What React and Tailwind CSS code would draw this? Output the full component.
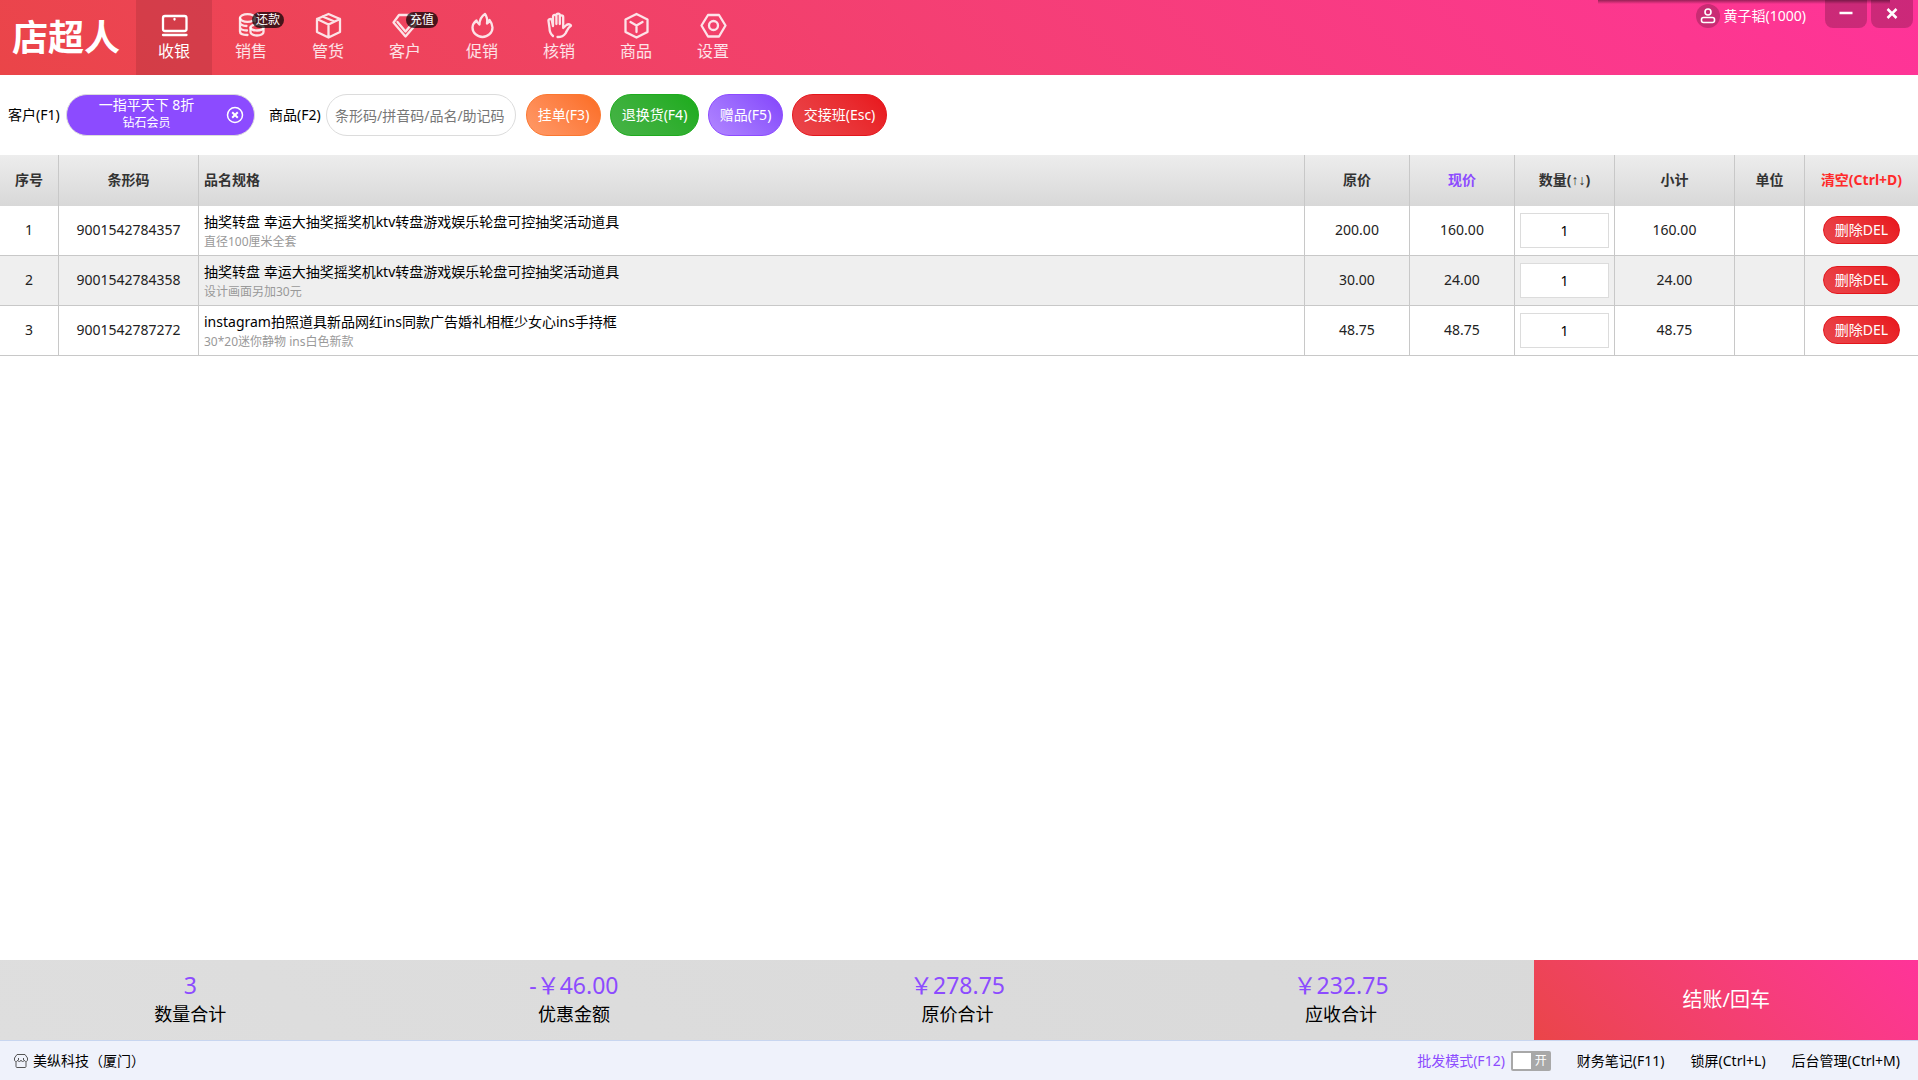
import { useState } from "react";

const NAV_ITEMS = [
  { key: "cashier", label: "收银" },
  { key: "sales", label: "销售", badge: "还款" },
  { key: "stock", label: "管货" },
  { key: "customer", label: "客户", badge: "充值" },
  { key: "promo", label: "促销" },
  { key: "verify", label: "核销" },
  { key: "goods", label: "商品" },
  { key: "settings", label: "设置" },
];

const ICONS = {
  cashier: (
    <>
      <rect x="2" y="4" width="23.5" height="15" rx="2" />
      <path d="M13.5 7v.5M2 23h23.5" />
    </>
  ),
  sales: (
    <>
      <ellipse cx="9.5" cy="6" rx="7.5" ry="3.8" />
      <path d="M2 6v4.5c0 2 3 3.5 6.5 3.5M2 10.5V15c0 2 3 3.5 7 3.5M2 15v4.5c0 2 3 3.5 7.5 3.5M17 6v3.500" />
      <ellipse cx="19" cy="15.5" rx="6.5" ry="3" />
      <path d="M12.5 15.5V20c0 2 3 3.5 6.5 3.5s6.5-1.5 6.5-3.5v-4.5" />
    </>
  ),
  stock: (
    <path d="M13.5 2 25 7v13l-11.5 5.500L2 20V7zM2 7l11.5 5.500L25 7M13.5 12.5v13M7.5 4.5l12 5" />
  ),
  customer: (
    <>
      <path d="M7 3h13l5.5 7.5-12 14-12-14z" />
      <path d="M5.5 10l8 9.5 8-9.500" />
    </>
  ),
  promo: (
    <path d="M7.5 8.5C4.5 11 3.5 13.5 3.5 15.5c0 5.2 4.5 9.5 10 9.5s10-4.3 10-9.5c0-3-1.5-5.5-3-7.5-.3 1.5-1 2.7-2.5 3.5.5-3.5.3-6.5-2-9.500-3 2-5.500 5.500-5.500 10.500C9 11.500 8 10 7.500 8.500z" />
  ),
  verify: (
    <path d="M7 24C4.5 22 3.5 19.5 3.5 16L2.5 9a1.700 1.700 0 0 1 3.300-.8L7 14V4.500a1.700 1.700 0 0 1 3.400 0V12M10.400 4V3.300a1.700 1.700 0 0 1 3.400 0V12M13.800 5a1.700 1.700 0 0 1 3.400 0V16l3.300-3c2-1.500 4.500-.5 4.500.8-3 1.700-4 5-5.500 7.500-2 3-5 3.700-8 3.700" />
  ),
  goods: (
    <path d="M13.5 2l11 5.500V20l-11 5.500-11-5.500V7.500zM7.500 10l6 3.500 6-3.500M13.500 13.500V20" />
  ),
  settings: (
    <>
      <path d="M8 3h11l6.500 10.500L19 24.500H8L1.500 13.500z" />
      <circle cx="13.5" cy="13.5" r="4.5" />
    </>
  ),
};

const NavIcon = ({ name }) => (
  <svg
    className="h-[27px] w-[27px]"
    viewBox="0 0 27 27"
    fill="none"
    stroke="currentColor"
    strokeWidth="2.3"
    strokeLinecap="round"
    strokeLinejoin="round"
  >
    {ICONS[name]}
  </svg>
);

const INITIAL_ROWS = [
  {
    code: "9001542784357",
    name: "抽奖转盘 幸运大抽奖摇奖机ktv转盘游戏娱乐轮盘可控抽奖活动道具",
    spec: "直径100厘米全套",
    price: 200,
    now: 160,
    qty: 1,
  },
  {
    code: "9001542784358",
    name: "抽奖转盘 幸运大抽奖摇奖机ktv转盘游戏娱乐轮盘可控抽奖活动道具",
    spec: "设计画面另加30元",
    price: 30,
    now: 24,
    qty: 1,
  },
  {
    code: "9001542787272",
    name: "instagram拍照道具新品网红ins同款广告婚礼相框少女心ins手持框",
    spec: "30*20迷你静物 ins白色新款",
    price: 48.75,
    now: 48.75,
    qty: 1,
  },
];

const Header = ({ active, onSelect }) => (
  <header className="relative flex h-[75px] bg-linear-45 from-[#ea4548] to-[#ff3399] text-white">
    <h1 className="w-[136px] shrink-0 pl-3 text-[36px] leading-[75px] font-bold whitespace-nowrap">
      店超人
    </h1>
    <nav className="flex gap-px">
      {NAV_ITEMS.map((item) => (
        <button
          key={item.key}
          onClick={() => onSelect(item.key)}
          className={`relative flex w-[76px] flex-col items-center pt-3 ${
            active === item.key ? "bg-black/10" : "text-white/85"
          }`}
        >
          <NavIcon name={item.key} />
          <span className="text-base">{item.label}</span>
          {item.badge && (
            <span className="absolute top-3 left-[39px] h-4 w-8 rounded-full bg-black/70 text-center text-xs leading-4 text-white">
              {item.badge}
            </span>
          )}
        </button>
      ))}
    </nav>

    <div className="ml-auto flex items-start gap-1 pr-[5px]">
      <div className="mr-[15px] flex items-center gap-1 pt-1">
        <span className="flex h-6 w-6 items-center justify-center rounded-full bg-black/20">
          <svg
            className="h-4 w-4"
            viewBox="0 0 16 16"
            fill="none"
            stroke="currentColor"
            strokeWidth="1.6"
          >
            <circle cx="8" cy="4" r="3" />
            <rect x="1.5" y="9.5" width="13" height="5" rx="2" />
          </svg>
        </span>
        <span className="text-sm">黄子韬(1000)</span>
      </div>
      <button
        aria-label="最小化"
        className="flex h-7 w-[42px] items-center justify-center rounded-b-lg bg-black/20"
      >
        <svg
          className="h-4 w-4"
          viewBox="0 0 16 16"
          stroke="currentColor"
          strokeWidth="2.5"
        >
          <path d="M1.5 7h13" />
        </svg>
      </button>
      <button
        aria-label="关闭"
        className="flex h-7 w-[42px] items-center justify-center rounded-b-lg bg-black/20"
      >
        <svg
          className="h-4 w-4"
          viewBox="0 0 16 16"
          stroke="currentColor"
          strokeWidth="2.5"
        >
          <path d="M3.5 3l9 9M12.5 3l-9 9" />
        </svg>
      </button>
    </div>
    <div className="absolute top-0 right-7 h-1 w-[292px] bg-linear-to-b from-black/40 to-transparent" />
  </header>
);

const Toolbar = ({ member, onClearMember }) => (
  <div className="flex h-20 items-center pl-2 text-sm">
    <span className="w-[58px]">客户(F1)</span>
    <div className="flex h-[42px] w-[189px] items-center rounded-full border border-[#dcdcdc] bg-[#8c4bff] text-white">
      <div className="flex-1 text-center">
        <div className="text-sm leading-4">{member?.name}</div>
        <div className="text-xs leading-5">{member?.level}</div>
      </div>
      <button
        aria-label="清除客户"
        onClick={onClearMember}
        className="mr-[10px]"
      >
        <svg
          className="h-[18px] w-[18px]"
          viewBox="0 0 18 18"
          fill="none"
          stroke="currentColor"
          strokeWidth="1.5"
        >
          <circle cx="9" cy="9" r="7.5" />
          <path
            d="M6.2 6.2l5.6 5.600M11.8 6.200l-5.600 5.600"
            strokeWidth="2"
          />
        </svg>
      </button>
    </div>
    <label htmlFor="goods" className="ml-[14px] w-[57px]">
      商品(F2)
    </label>
    <input
      id="goods"
      type="text"
      placeholder="条形码/拼音码/品名/助记码"
      className="h-[42px] w-[190px] rounded-full border border-[#dcdcdc] px-2 outline-none placeholder:text-[#777]"
    />
    <div className="ml-[10px] flex gap-[9px] text-white">
      <button className="h-[42px] w-[75px] rounded-full border border-[#fb7730] bg-linear-45 from-[#ff9a68] to-[#fb6c20]">
        挂单(F3)
      </button>
      <button className="h-[42px] w-[89px] rounded-full border border-[#1eab1e] bg-linear-45 from-[#47b347] to-[#1aab1a]">
        退换货(F4)
      </button>
      <button className="h-[42px] w-[75px] rounded-full border border-[#8c4bff] bg-linear-45 from-[#b286ff] to-[#8443fb]">
        赠品(F5)
      </button>
      <button className="h-[42px] w-[95px] rounded-full border border-[#e4161c] bg-linear-45 from-[#ea464c] to-[#e8131a]">
        交接班(Esc)
      </button>
    </div>
  </div>
);

const CartTable = ({ rows, onQtyChange, onRemove, onClear }) => (
  <table className="w-full table-fixed border-separate border-spacing-0 text-center text-sm text-[#222]">
    <colgroup>
      <col className="w-[59px]" />
      <col className="w-[140px]" />
      <col />
      <col className="w-[105px]" />
      <col className="w-[105px]" />
      <col className="w-[100px]" />
      <col className="w-[120px]" />
      <col className="w-[70px]" />
      <col className="w-[113px]" />
    </colgroup>
    <thead>
      <tr className="h-[51px] bg-linear-to-b from-[#ededed] to-[#d8d8d8] text-[#333] [&>th]:border-r [&>th]:border-[#c8c8c8] [&>th]:pb-[2px] [&>th:last-child]:border-r-0">
        <th>序号</th>
        <th>条形码</th>
        <th className="pl-[5px] text-left">品名规格</th>
        <th>原价</th>
        <th className="text-[#8c4bff]">现价</th>
        <th>
          数量(
          <span className="font-['Liberation_Sans',sans-serif] font-normal">
            ↑↓
          </span>
          )
        </th>
        <th>小计</th>
        <th>单位</th>
        <th className="whitespace-nowrap text-[#ff2a2a]">
          <button onClick={onClear}>清空(Ctrl+D)</button>
        </th>
      </tr>
    </thead>
    <tbody>
      {rows.map((row, i) => (
        <tr
          key={row.code}
          className="h-[50px] even:bg-[#efefef] [&>td]:border-r [&>td]:border-b [&>td]:border-[#c8c8c8] [&>td]:pb-px [&>td:last-child]:border-r-0"
        >
          <td>{i + 1}</td>
          <td>{row.code}</td>
          <td className="pt-[3px] pl-[5px] text-left">
            <div className="leading-5 text-black">{row.name}</div>
            <div className="text-xs leading-5 text-[#999]">{row.spec}</div>
          </td>
          <td>{row.price.toFixed(2)}</td>
          <td>{row.now.toFixed(2)}</td>
          <td className="px-[5px]">
            <input
              type="text"
              aria-label="数量"
              value={row.qty}
              onChange={(e) => onQtyChange(row.code, e.target.value)}
              className="block h-[35px] w-full border border-[#dcdcdc] bg-white text-center text-black outline-none"
            />
          </td>
          <td>{(row.now * row.qty).toFixed(2)}</td>
          <td></td>
          <td>
            <button
              onClick={() => onRemove(row.code)}
              className="h-7 w-[77px] rounded-full border border-[#e4161c] bg-linear-45 from-[#ea464c] to-[#e8131a] text-white"
            >
              删除DEL
            </button>
          </td>
        </tr>
      ))}
    </tbody>
  </table>
);

const Summary = ({ rows }) => {
  const count = rows.reduce((sum, r) => sum + Number(r.qty), 0);
  const original = rows.reduce((sum, r) => sum + r.price * r.qty, 0);
  const due = rows.reduce((sum, r) => sum + r.now * r.qty, 0);

  const totals = [
    { label: "数量合计", value: count },
    { label: "优惠金额", value: `-￥${(original - due).toFixed(2)}` },
    { label: "原价合计", value: `￥${original.toFixed(2)}` },
    { label: "应收合计", value: `￥${due.toFixed(2)}` },
  ];

  return (
    <div className="mt-auto grid h-20 grid-cols-5 bg-linear-45 from-[#dedede] to-[#d8d8d8]">
      {totals.map((t) => (
        <div key={t.label} className="pt-2 pr-[3px] text-center">
          <div className="text-[23px] leading-[34px] text-[#8c4bff]">
            {t.value}
          </div>
          <div className="text-lg leading-6 text-black">{t.label}</div>
        </div>
      ))}
      <button className="bg-linear-45 from-[#ea4548] to-[#ff3399] text-xl text-white">
        结账/回车
      </button>
    </div>
  );
};

const StatusBar = () => {
  const [wholesale, setWholesale] = useState(false);

  return (
    <footer className="flex h-10 items-center border-t border-[#c8d6f0] bg-[#eff2fb] px-[14px] text-sm text-black">
      <svg
        className="mr-[5px] h-[14px] w-[14px] text-[#555]"
        viewBox="0 0 14 14"
        fill="none"
        stroke="currentColor"
      >
        <path d="M3 .5h8L13.500 4v2c0 2-3.200 2-3.200 0 0 2-3.300 2-3.300 0 0 2-3.300 2-3.300 0C3.700 8 .5 8 .5 6V4zM2 8v4.500c0 .6.4 1 1 1h8c.6 0 1-.4 1-1V8M4.500 4v2M9.500 4v2" />
      </svg>
      <span>美纵科技（厦门）</span>
      <div className="ml-auto flex items-center gap-[26px]">
        <label className="flex items-center gap-[6px] text-[#8c4bff]">
          批发模式(F12)
          <input
            type="checkbox"
            className="sr-only"
            checked={wholesale}
            onChange={(e) => setWholesale(e.target.checked)}
          />
          <span className="flex h-5 w-10 items-center justify-between rounded-xs bg-[#a8a8a8] px-[2px] text-xs text-white">
            <span className="h-4 w-[18px] bg-white" />
            <span className="pr-[2px]">开</span>
          </span>
        </label>
        <a href="#notes">财务笔记(F11)</a>
        <a href="#lock">锁屏(Ctrl+L)</a>
        <a href="#admin" className="pr-1">
          后台管理(Ctrl+M)
        </a>
      </div>
    </footer>
  );
};

const App = () => {
  const [active, setActive] = useState("cashier");
  const [rows, setRows] = useState(INITIAL_ROWS);
  const [member, setMember] = useState({
    name: "一指平天下 8折",
    level: "钻石会员",
  });

  const changeQty = (code, qty) => {
    setRows(rows.map((r) => (r.code === code ? { ...r, qty } : r)));
  };

  return (
    <div className="flex min-h-screen flex-col bg-white font-['Noto_Sans','Noto_Sans_CJK_SC',sans-serif]">
      <Header active={active} onSelect={setActive} />
      <Toolbar member={member} onClearMember={() => setMember(null)} />
      <CartTable
        rows={rows}
        onQtyChange={changeQty}
        onRemove={(code) => setRows(rows.filter((r) => r.code !== code))}
        onClear={() => setRows([])}
      />
      <Summary rows={rows} />
      <StatusBar />
    </div>
  );
};

export default App;
